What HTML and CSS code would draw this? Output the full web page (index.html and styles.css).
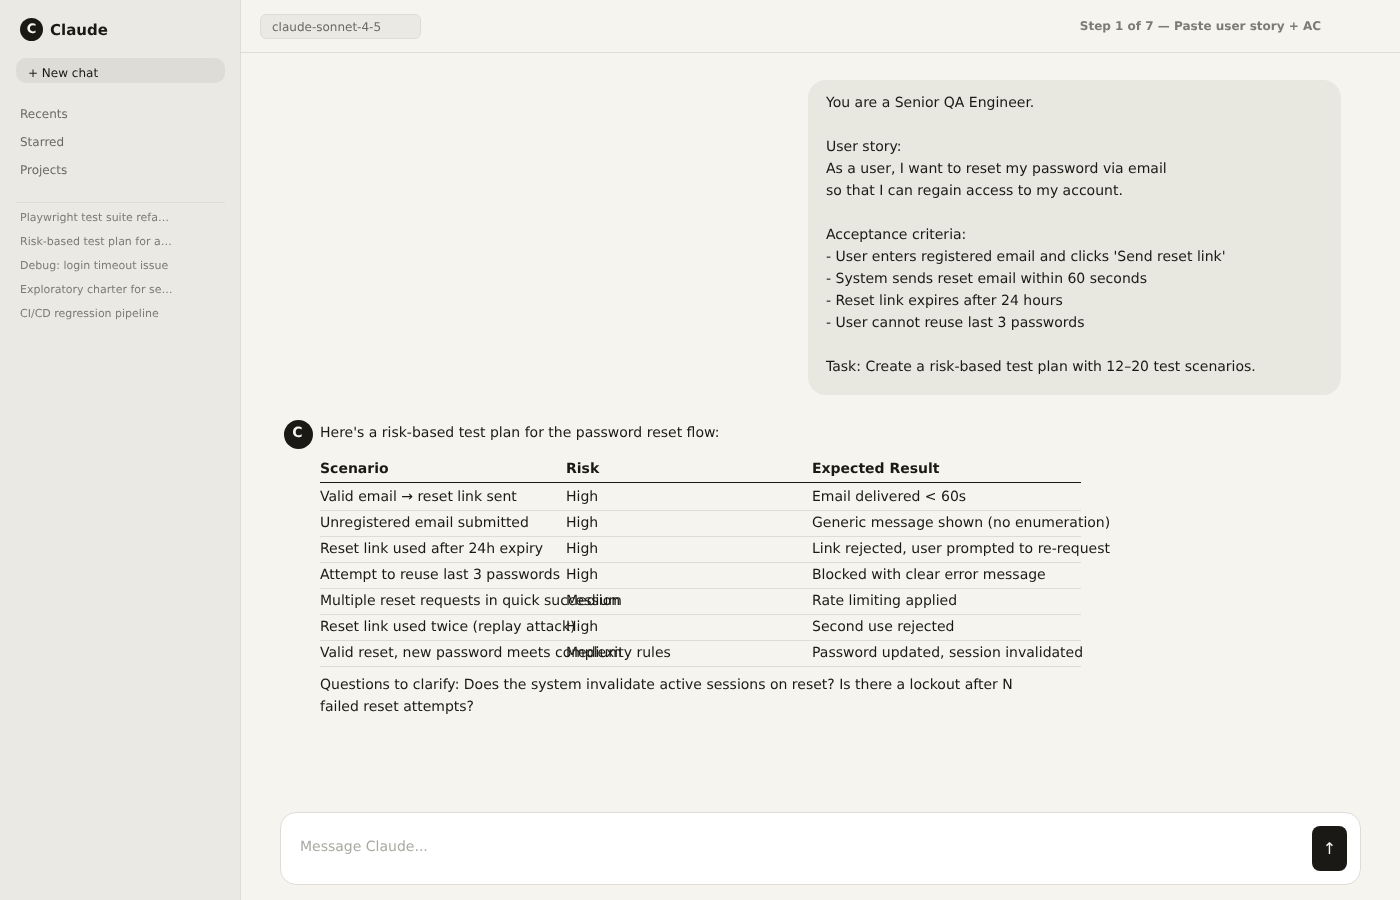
FILE: index.html
```html
<!DOCTYPE html>
<html>
<head>
<meta charset="utf-8">
<title>Claude</title>
<link rel="stylesheet" href="styles.css">
</head>
<body>
<div class="app">
  <aside class="sidebar">
    <div class="brand"><span class="avatar">C</span><span class="brand-name">Claude</span></div>
    <div class="new-chat">+ New chat</div>
    <nav class="nav">
      <a>Recents</a>
      <a>Starred</a>
      <a>Projects</a>
    </nav>
    <div class="history">
      <a>Playwright test suite refa…</a>
      <a>Risk-based test plan for a…</a>
      <a>Debug: login timeout issue</a>
      <a>Exploratory charter for se…</a>
      <a>CI/CD regression pipeline</a>
    </div>
  </aside>
  <main class="main">
    <header class="topbar">
      <div class="model">claude-sonnet-4-5</div>
      <div class="step">Step 1 of 7 — Paste user story + AC</div>
    </header>
    <section class="thread">
      <div class="user-msg">You are a Senior QA Engineer.

User story:
As a user, I want to reset my password via email
so that I can regain access to my account.

Acceptance criteria:
- User enters registered email and clicks 'Send reset link'
- System sends reset email within 60 seconds
- Reset link expires after 24 hours
- User cannot reuse last 3 passwords

Task: Create a risk-based test plan with 12–20 test scenarios.</div>
      <div class="reply">
        <span class="avatar avatar-reply">C</span>
        <div class="reply-body">
          <p class="intro">Here's a risk-based test plan for the password reset flow:</p>
          <div class="plan">
            <div class="row head"><span>Scenario</span><span>Risk</span><span>Expected Result</span></div>
            <div class="row"><span>Valid email → reset link sent</span><span>High</span><span>Email delivered &lt; 60s</span></div>
            <div class="row"><span>Unregistered email submitted</span><span>High</span><span>Generic message shown (no enumeration)</span></div>
            <div class="row"><span>Reset link used after 24h expiry</span><span>High</span><span>Link rejected, user prompted to re-request</span></div>
            <div class="row"><span>Attempt to reuse last 3 passwords</span><span>High</span><span>Blocked with clear error message</span></div>
            <div class="row"><span>Multiple reset requests in quick succession</span><span>Medium</span><span>Rate limiting applied</span></div>
            <div class="row"><span>Reset link used twice (replay attack)</span><span>High</span><span>Second use rejected</span></div>
            <div class="row"><span>Valid reset, new password meets complexity rules</span><span>Medium</span><span>Password updated, session invalidated</span></div>
          </div>
          <p class="outro">Questions to clarify: Does the system invalidate active sessions on reset? Is there a lockout after N failed reset attempts?</p>
        </div>
      </div>
    </section>
    <div class="composer">
      <span class="placeholder">Message Claude...</span>
      <button class="send">↑</button>
    </div>
  </main>
</div>
</body>
</html>
```
FILE: styles.css
```css
* { box-sizing: border-box; }
body { margin: 0; background: #f5f4ef; color: #1a1915; font-family: "DejaVu Sans", sans-serif; font-size: 14px; text-rendering: geometricPrecision; }
.app { display: flex; height: 900px; overflow: hidden; will-change: transform; }

.sidebar { width: 241px; flex: none; background: #eae9e4; border-right: 1px solid #dddcd6; padding: 18px 15px 0 16px; }
.brand { display: flex; align-items: center; gap: 7px; padding-left: 4px; height: 23px; }
.avatar { width: 23px; height: 23px; border-radius: 50%; background: #1a1915; color: #f5f4ef; font-size: 13px; font-weight: 700; display: flex; align-items: center; justify-content: center; flex: none; }
.brand-name { font-size: 15px; font-weight: 700; }
.new-chat { margin-top: 17px; height: 25px; line-height: 30px; padding-left: 12px; background: #dddcd7; border-radius: 10px; font-size: 12px; }
.nav { margin-top: 17px; display: flex; flex-direction: column; }
.nav a { height: 28px; line-height: 28px; padding-left: 4px; font-size: 12px; color: #6b6a64; }
.history { margin-top: 18px; padding-top: 2px; border-top: 1px solid #dddcd6; display: flex; flex-direction: column; }
.history a { height: 24px; line-height: 25px; padding-left: 4px; font-size: 11px; color: #7c7b75; }

.main { flex: 1; display: flex; flex-direction: column; min-width: 0; }
.topbar { height: 53px; flex: none; border-bottom: 1px solid #dddcd6; display: flex; align-items: center; justify-content: space-between; padding: 0 79px 0 19px; }
.model { width: 161px; height: 25px; line-height: 24px; padding-left: 11px; background: #eae9e4; border: 1px solid #dddcd6; border-radius: 6px; font-size: 12px; color: #6b6a64; }
.step { font-size: 12px; font-weight: 700; color: #7c7b75; }

.thread { flex: 1; padding: 27px 59px 0 43px; display: flex; flex-direction: column; }
.user-msg { align-self: flex-end; width: 533px; height: 315px; padding: 12px 18px 0; background: #e8e7e0; border-radius: 18px; font-size: 14px; line-height: 22px; white-space: pre-wrap; }
.reply { display: flex; gap: 7px; margin-top: 25px; }
.avatar-reply { width: 29px; height: 29px; padding: 0 2px 3px 0; font-size: 14px; }
.reply-body { width: 761px; line-height: 22px; padding-top: 2px; }
.intro { margin: 0 0 12px; }
.plan { display: flex; flex-direction: column; }
.row { display: grid; grid-template-columns: 246px 246px 1fr; height: 26px; line-height: 25px; border-bottom: 1px solid #dddcd6; white-space: nowrap; }
.row.head { height: 27px; line-height: 27px; font-weight: 700; border-bottom-color: #1a1915; }
.row.head + .row { height: 28px; line-height: 29px; }
.outro { margin: 7px 0 0; max-width: 720px; }

.composer { height: 73px; flex: none; margin: 0 39px 15px; padding: 0 0 0 19px; background: #fff; border: 1px solid #dddcd6; border-radius: 16px; display: flex; align-items: center; justify-content: space-between; }
.placeholder { color: #a9a8a2; margin-bottom: 4px; }
.send { width: 35px; height: 45px; margin: 0 13px 0 0; padding: 0; border: 0; border-radius: 8px; background: #1a1915; color: #f5f4ef; font-family: inherit; font-size: 16px; }
```
